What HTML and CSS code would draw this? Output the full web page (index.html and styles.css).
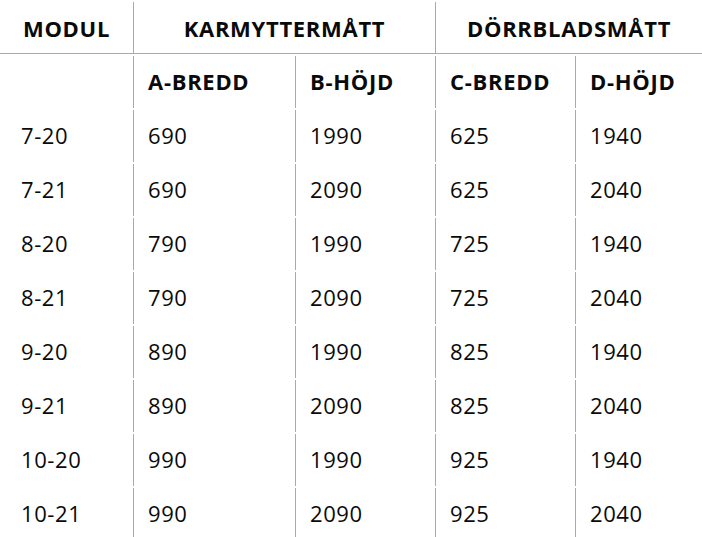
FILE: index.html
```html
<!DOCTYPE html>
<html lang="sv">
<head>
<meta charset="utf-8">
<title>Mått</title>
<link rel="stylesheet" href="styles.css">
</head>
<body>
<table class="dims">
  <colgroup>
    <col class="c-mod"><col class="c-a"><col class="c-b"><col class="c-c"><col class="c-d">
  </colgroup>
  <thead>
    <tr class="top">
      <th class="center">MODUL</th>
      <th class="center sep" colspan="2">KARMYTTERMÅTT</th>
      <th class="center sep" colspan="2">DÖRRBLADSMÅTT</th>
    </tr>
    <tr class="sub">
      <th class="first"></th>
      <th class="sep">A-BREDD</th>
      <th class="sep">B-HÖJD</th>
      <th class="sep">C-BREDD</th>
      <th class="sep">D-HÖJD</th>
    </tr>
  </thead>
  <tbody>
    <tr><td class="first">7-20</td><td class="sep">690</td><td class="sep">1990</td><td class="sep">625</td><td class="sep">1940</td></tr>
    <tr><td class="first">7-21</td><td class="sep">690</td><td class="sep">2090</td><td class="sep">625</td><td class="sep">2040</td></tr>
    <tr><td class="first">8-20</td><td class="sep">790</td><td class="sep">1990</td><td class="sep">725</td><td class="sep">1940</td></tr>
    <tr><td class="first">8-21</td><td class="sep">790</td><td class="sep">2090</td><td class="sep">725</td><td class="sep">2040</td></tr>
    <tr><td class="first">9-20</td><td class="sep">890</td><td class="sep">1990</td><td class="sep">825</td><td class="sep">1940</td></tr>
    <tr><td class="first">9-21</td><td class="sep">890</td><td class="sep">2090</td><td class="sep">825</td><td class="sep">2040</td></tr>
    <tr><td class="first">10-20</td><td class="sep">990</td><td class="sep">1990</td><td class="sep">925</td><td class="sep">1940</td></tr>
    <tr><td class="first">10-21</td><td class="sep">990</td><td class="sep">2090</td><td class="sep">925</td><td class="sep">2040</td></tr>
  </tbody>
</table>
</body>
</html>
```
FILE: styles.css
```css
html, body {
  margin: 0;
  padding: 0;
  background: #ffffff;
}
body {
  font-family: "Open Sans", "Noto Sans", sans-serif;
  color: #0a0a0a;
  overflow: hidden;
}
.dims {
  border-collapse: separate;
  border-spacing: 0 2px;
  table-layout: fixed;
  width: 702px;
  font-size: 22px;
}
.c-mod { width: 133px; }
.c-a { width: 162px; }
.c-b { width: 140px; }
.c-c { width: 140px; }
.c-d { width: 127px; }

.dims th, .dims td {
  height: 52px;
  padding: 0 0 0 14px;
  text-align: left;
  vertical-align: middle;
  box-sizing: border-box;
  white-space: nowrap;
}
.dims th {
  font-weight: 700;
  letter-spacing: 0.7px;
}
.dims td {
  font-weight: 400;
  letter-spacing: 0.6px;
}
.dims td, .sub th {
  padding-bottom: 2px;
}
.dims .sep {
  border-left: 1px solid #a9a9a9;
}
.dims .first {
  padding-left: 21px;
}
.dims .center {
  text-align: center;
  padding-left: 0;
}
.top th {
  border-bottom: 1px solid #a9a9a9;
}
```
